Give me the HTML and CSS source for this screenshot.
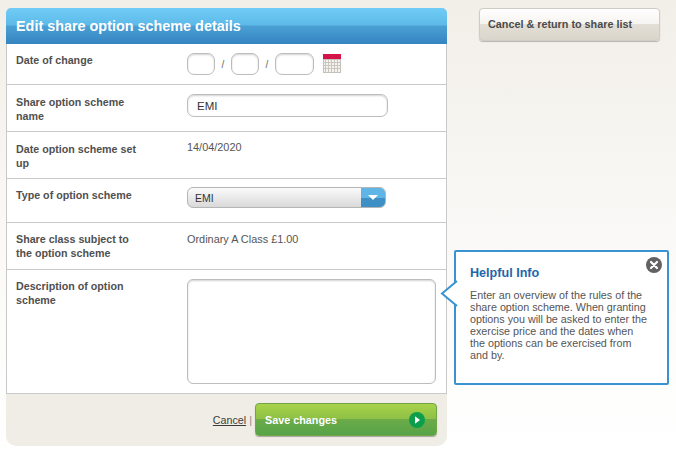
FILE: index.html
```html
<!DOCTYPE html>
<html lang="en">
<head>
<meta charset="utf-8">
<title>Edit share option scheme details</title>
<link rel="stylesheet" href="styles.css">
</head>
<body>
<div class="page">
  <main class="card">
    <h1 class="card-title">Edit share option scheme details</h1>
    <div class="rows">
      <div class="row row-date">
        <div class="label">Date of change</div>
        <div class="field date-field">
          <span class="input day"></span><span class="slash">/</span>
          <span class="input day"></span><span class="slash">/</span>
          <span class="input year"></span>
          <svg class="cal" width="18" height="19" viewBox="0 0 18 19" aria-hidden="true">
            <rect x="0" y="0" width="18" height="19" fill="#c4c1bb"/>
            <rect x="0" y="0" width="18" height="5" fill="#d3154a"/>
            <rect x="1" y="6" width="16" height="12" fill="#f4f3ef"/>
            <path d="M2.500 6v12M5.500 6v12M8.500 6v12M11.500 6v12M14.500 6v12M1 8.500h16M1 11.500h16M1 14.500h16" stroke="#c9c6c0" stroke-width="1" fill="none"/>
          </svg>
        </div>
      </div>
      <div class="row row-name">
        <div class="label">Share option scheme name</div>
        <div class="field"><span class="input name-input">EMI</span></div>
      </div>
      <div class="row row-setup">
        <div class="label">Date option scheme set up</div>
        <div class="field value value-up">14/04/2020</div>
      </div>
      <div class="row row-type">
        <div class="label">Type of option scheme</div>
        <div class="field">
          <div class="select">
            <span class="select-text">EMI</span>
            <span class="select-btn"><svg width="10" height="5" viewBox="0 0 10 5" aria-hidden="true"><path d="M0 0h10L5 5z" fill="#fff"/></svg></span>
          </div>
        </div>
      </div>
      <div class="row row-class">
        <div class="label">Share class subject to the option scheme</div>
        <div class="field value">Ordinary A Class £1.00</div>
      </div>
      <div class="row row-desc">
        <div class="label">Description of option scheme</div>
        <div class="field"><span class="input textarea"></span></div>
      </div>
    </div>
    <div class="card-footer">
      <a class="cancel" href="#">Cancel</a><span class="pipe">|</span>
      <a class="save" href="#"><span>Save changes</span>
        <svg width="16" height="16" viewBox="0 0 16 16" aria-hidden="true"><circle cx="8" cy="8" r="8" fill="#0d9e4c"/><path d="M6 4.200 11 8l-5 3.800z" fill="#fff"/></svg>
      </a>
    </div>
  </main>
  <aside class="side">
    <a class="back" href="#">Cancel &amp; return to share list</a>
  </aside>
</div>
<section class="help">
  <svg class="help-arrow" width="18" height="28" viewBox="0 0 18 28" aria-hidden="true"><path d="M17 1 2 13.500 17 26" fill="#fff" stroke="#3a93d1" stroke-width="2"/></svg>
  <svg class="help-close" width="16" height="16" viewBox="0 0 16 16" aria-hidden="true"><circle cx="8" cy="8" r="8" fill="#626262"/><path d="M5 5l6 6M11 5l-6 6" stroke="#fff" stroke-width="2.200" stroke-linecap="round"/></svg>
  <h2 class="help-title">Helpful Info</h2>
  <p class="help-text">Enter an overview of the rules of the share option scheme. When granting options you will be asked to enter the exercise price and the dates when the options can be exercised from and by.</p>
</section>
</body>
</html>
```
FILE: styles.css
```css
* { box-sizing: border-box; }
html, body { height: 100%; }
body {
  margin: 0;
  position: relative;
  overflow: hidden;
  font-family: "Liberation Sans", Arial, sans-serif;
  font-size: 11px;
  color: #444;
  background: linear-gradient(#f2efe9 0, #f5f3ee 100px, #fbfaf8 260px, #fff 452px);
}
.page {
  display: flex;
  align-items: flex-start;
  padding: 8px 0 0 6px;
}
.card { width: 441px; flex: none; }
.card-title {
  margin: 0;
  height: 36px;
  padding: 0 10px;
  font-size: 14.400px;
  line-height: 36px;
  font-weight: bold;
  color: #fff;
  border-radius: 5px 5px 0 0;
  background: linear-gradient(#70cdf6 0, #5db9e8 17px, #4aa0d5 18px, #3584c0 100%);
}
.rows {
  background: #fff;
  border: 1px solid #c9c9c9;
  border-top: 0;
}
.row {
  display: flex;
  border-bottom: 1px solid #c9c9c9;
}
.row:last-child { border-bottom: 0; }
.row-date { height: 41px; padding-top: 9px; }
.row-name { height: 47px; padding-top: 9px; }
.row-setup { height: 47px; padding-top: 10px; }
.row-type { height: 44px; padding-top: 9px; }
.row-class { height: 47px; padding-top: 9px; }
.row-desc { height: 123px; padding-top: 9px; }
.label {
  width: 180px;
  flex: none;
  padding: 0 40px 0 9px;
  font-weight: bold;
  line-height: 14px;
  font-size: 10.700px;
  color: #505050;
}
.row-name .label { padding-top: 1px; }
.field { flex: 1; min-width: 0; }
.value { font-size: 10.900px; line-height: 15px; color: #555; }
.value-up { margin-top: -2px; }
.input {
  display: block;
  background: #fff;
  border: 1px solid #bdbdbd;
  border-radius: 7px;
  box-shadow: inset 0 1px 2px rgba(0,0,0,.18);
}
.date-field { display: flex; align-items: flex-start; }
.date-field .input { height: 22px; }
.day { width: 28px; }
.year { width: 39px; }
.slash { width: 16px; text-align: center; line-height: 24px; font-size: 10px; color: #666; }
.cal { margin-left: 9px; margin-top: 1px; }
.name-input {
  width: 201px;
  height: 23px;
  padding-left: 9px;
  font-size: 11.500px;
  line-height: 22px;
  color: #333;
}
.select {
  display: flex;
  width: 199px;
  height: 21px;
  margin-top: -1px;
  border: 1px solid #b5b5b5;
  border-radius: 6px;
  overflow: hidden;
  background: linear-gradient(#fbfbfb, #d9d9d9);
}
.select-text { flex: 1; padding-left: 7px; font-size: 10.500px; line-height: 20px; color: #333; }
.select-btn {
  width: 24px;
  display: flex;
  align-items: center;
  justify-content: center;
  background: linear-gradient(#5fb5e6 0, #5fb5e6 50%, #3d8fc6 50%, #3d8fc6 100%);
}
.textarea { width: 249px; height: 105px; border-radius: 6px; }
.card-footer {
  height: 52px;
  display: flex;
  justify-content: flex-end;
  align-items: flex-start;
  padding: 9px 10px 0 0;
  background: #f0ede6;
  border-radius: 0 0 10px 10px;
}
.cancel { color: #3c3c3c; line-height: 34px; font-size: 10.700px; text-decoration: underline; }
.pipe { color: #888; line-height: 34px; margin: 0 3px 0 3px; }
.save {
  width: 182px;
  height: 33px;
  display: flex;
  align-items: center;
  justify-content: space-between;
  padding: 0 11px 0 9px;
  color: #fff;
  font-weight: bold;
  font-size: 10.800px;
  text-decoration: none;
  border: 1px solid #70a548;
  border-radius: 4px;
  box-shadow: 0 1px 1px rgba(0,0,0,.3);
  background: linear-gradient(#a8d24a 0, #8dc045 50%, #6cab48 50%, #56a348 100%);
}
.side { margin-left: 32px; }
.back {
  display: block;
  width: 181px;
  height: 33px;
  padding-left: 8px;
  font-size: 10.800px;
  font-weight: bold;
  line-height: 30px;
  color: #4a4a4a;
  text-decoration: none;
  border: 1px solid #cfccc5;
  border-radius: 4px;
  box-shadow: 0 1px 1px rgba(0,0,0,.25);
  background: linear-gradient(#fff 0, #f6f4f0 48%, #e3dfd6 50%, #d9d5cb 100%);
}
.help {
  position: absolute;
  left: 454px;
  top: 250px;
  width: 215px;
  height: 135px;
  padding: 13px 18px 0 14px;
  background: #fff;
  border: 2px solid #3a93d1;
  border-radius: 2px;
}
.help-arrow { position: absolute; left: -16px; top: 28px; }
.help-close { position: absolute; right: 5px; top: 5px; }
.help-title {
  margin: 0 0 8px;
  font-size: 12.600px;
  line-height: 16px;
  font-weight: bold;
  color: #1f66ad;
}
.help-text {
  margin: 0;
  font-size: 10.750px;
  line-height: 12px;
  color: #555;
}
```
